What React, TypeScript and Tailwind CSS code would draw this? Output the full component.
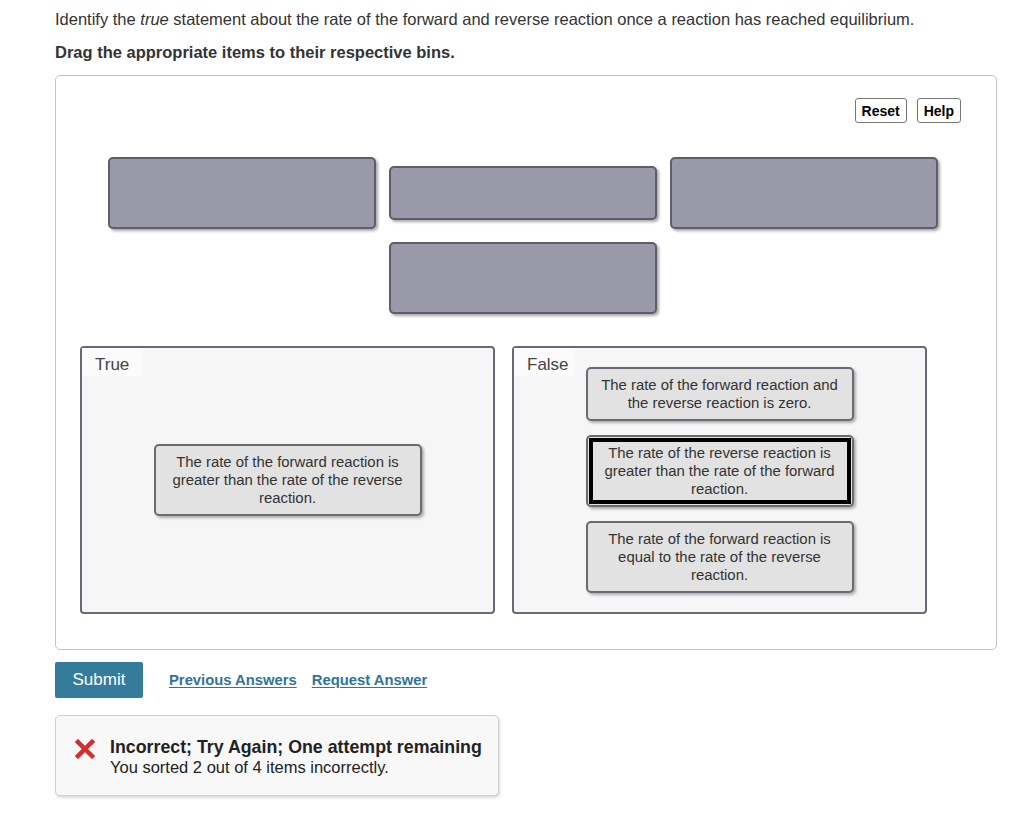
import React from 'react';

// 빈 슬롯 (아이템이 원래 있던 자리)
function Slot({ tall = true }: { tall?: boolean }) {
  return (
    <div
      className={`w-[268px] ${tall ? 'h-[72px]' : 'h-[54px]'} rounded-[5px] border-2 border-[#5e5d69] bg-[#9a99a9] shadow-[2px_2px_3px_rgba(0,0,0,0.35)]`}
    />
  );
}

// 드래그 아이템
function Item({ text, selected = false, tall = true }: { text: React.ReactNode; selected?: boolean; tall?: boolean }) {
  return (
    <div
      className={`w-[268px] ${tall ? 'h-[72px]' : 'h-[54px]'} rounded-[5px] border-2 border-[#6a6a75] bg-[#e2e2e2] shadow-[2px_2px_3px_rgba(0,0,0,0.3)] ${selected ? 'p-[1px]' : ''}`}
    >
      <div
        className={`h-full w-full flex items-center justify-center text-center text-[14.9px] leading-[18px] text-[#333] px-2 ${selected ? 'border-[4px] border-black' : ''}`}
      >
        <span>{text}</span>
      </div>
    </div>
  );
}

// 분류 상자
function Bin({ label, children }: { label: string; children: React.ReactNode }) {
  return (
    <div className="relative w-[415px] h-[268px] rounded-[4px] border-2 border-[#696977] bg-[#f6f6f6] flex flex-col items-center justify-center gap-[14px]">
      <div className="absolute left-0 top-0 w-[61px] h-[28px] bg-[#fbfbfb] pl-[13px] pt-[4px] text-[17px] text-[#444]">
        {label}
      </div>
      {children}
    </div>
  );
}

export default function App() {
  return (
    <div className="min-h-[816px] bg-white text-[#333] font-['Liberation_Sans',Arial,sans-serif] pl-[55px] pt-[9px]">
      <p className="text-[16.5px] leading-[20px]">
        Identify the <i>true</i> statement about the rate of the forward and reverse reaction once a reaction has reached equilibrium.
      </p>
      <p className="mt-[13px] text-[16.5px] leading-[20px] font-bold">Drag the appropriate items to their respective bins.</p>

      {/* 메인 패널 */}
      <div className="mt-[13px] w-[942px] h-[575px] rounded-[5px] border border-[#c4c4c4] pt-[22px]">
        <div className="flex justify-end gap-[10px] pr-[35px]">
          <button className="h-[25px] px-[6px] rounded-[3px] border border-[#777] bg-white text-[14px] font-bold text-black leading-none">
            Reset
          </button>
          <button className="h-[25px] px-[6px] rounded-[3px] border border-[#777] bg-white text-[14px] font-bold text-black leading-none">
            Help
          </button>
        </div>

        <div className="mt-[34px] pl-[52px] flex items-center gap-[13px]">
          <Slot />
          <Slot tall={false} />
          <Slot />
        </div>
        <div className="mt-[13px] pl-[333px]">
          <Slot />
        </div>

        <div className="mt-[32px] pl-[24px] flex gap-[17px]">
          <Bin label="True">
            <Item text="The rate of the forward reaction is greater than the rate of the reverse reaction." />
          </Bin>
          <Bin label="False">
            <Item tall={false} text={<>The rate of the forward reaction and<br />the reverse reaction is zero.</>} />
            <Item selected text="The rate of the reverse reaction is greater than the rate of the forward reaction." />
            <Item text="The rate of the forward reaction is equal to the rate of the reverse reaction." />
          </Bin>
        </div>
      </div>

      {/* 제출 영역 */}
      <div className="mt-[12px] flex items-center">
        <button className="w-[88px] h-[36px] rounded-[2px] bg-[#357b9c] text-white text-[17px]">Submit</button>
        <a className="ml-[26px] text-[14.8px] font-bold text-[#2f7597] underline underline-offset-2">Previous Answers</a>
        <a className="ml-[15px] text-[14.8px] font-bold text-[#2f7597] underline underline-offset-2">Request Answer</a>
      </div>

      {/* 피드백 */}
      <div className="mt-[17px] w-[444px] h-[81px] rounded-[5px] border border-[#cfcfcf] bg-[#f8f8f8] shadow-[1px_2px_3px_rgba(0,0,0,0.15)] flex pl-[19px] pt-[21px]">
        <svg width="20" height="20" viewBox="0 0 20 20" className="mt-[2px]">
          <path d="M3 3 L17 17 M17 3 L3 17" stroke="#d32f2f" strokeWidth="4.5" strokeLinecap="square" />
        </svg>
        <div className="ml-[15px]">
          <div className="text-[17.8px] leading-[21px] font-bold text-[#222]">Incorrect; Try Again; One attempt remaining</div>
          <div className="text-[16.5px] leading-[19px] text-[#222]">You sorted 2 out of 4 items incorrectly.</div>
        </div>
      </div>
    </div>
  );
}
